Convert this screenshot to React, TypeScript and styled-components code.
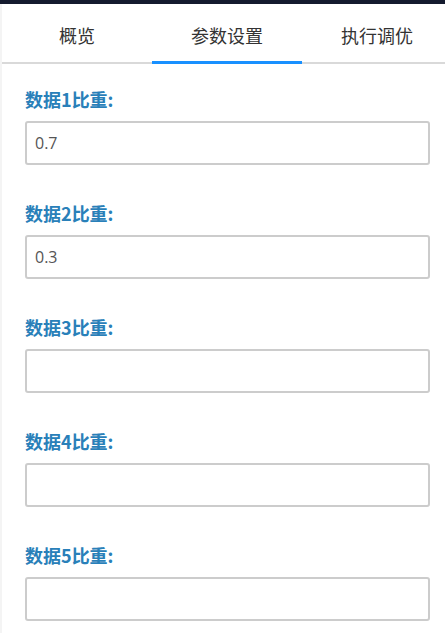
import { createGlobalStyle } from 'styled-components';
import styled from 'styled-components';

const GlobalStyle = createGlobalStyle`
  html, body {
    margin: 0;
    padding: 0;
    background: #ffffff;
    overflow: hidden;
  }
  body {
    font-family: 'Open Sans', 'Noto Sans CJK SC', sans-serif;
  }
`;

const TopBar = styled.div`
  height: 4px;
  background: #141a2e;
`;

const Panel = styled.div`
  border-left: 2px solid #f4f4f4;
  min-height: 629px;
`;

const Tabs = styled.nav`
  display: flex;
  border-bottom: 2px solid #d9d9d9;
`;

const Tab = styled.div<{ $active?: boolean }>`
  position: relative;
  flex: 0 0 150px;
  height: 58px;
  display: flex;
  align-items: center;
  justify-content: center;
  font-family: 'Noto Sans CJK SC', sans-serif;
  font-size: 18px;
  color: #333333;
  padding-top: 4px;
  box-sizing: border-box;

  &::after {
    content: '';
    display: ${({ $active }) => ($active ? 'block' : 'none')};
    position: absolute;
    left: 0;
    right: 0;
    bottom: -2px;
    height: 3px;
    background: #1890ff;
  }
`;

const Form = styled.div`
  padding: 23px 15px 0 23px;
  display: flex;
  flex-direction: column;
  gap: 36px;
`;

const Field = styled.div`
  display: flex;
  flex-direction: column;
  gap: 10px;
`;

const Label = styled.label`
  font-family: 'Noto Sans CJK SC', sans-serif;
  font-weight: 700;
  font-size: 18px;
  line-height: 24px;
  color: #2980b9;
`;

const Input = styled.input`
  box-sizing: border-box;
  width: 100%;
  height: 44px;
  border: 2px solid #cccccc;
  border-radius: 3px;
  padding: 0 8px;
  font-family: 'Open Sans', 'Noto Sans CJK SC', sans-serif;
  font-size: 16px;
  color: #555555;
  background: #ffffff;
  outline: none;
`;

const tabs = ['概览', '参数设置', '执行调优'];
const weights = ['0.7', '0.3', '', '', ''];

export default function App() {
  return (
    <>
      <GlobalStyle />
      <TopBar />
      <Panel>
        <Tabs>
          {tabs.map((t, i) => (
            <Tab key={t} $active={i === 1}>
              {t}
            </Tab>
          ))}
        </Tabs>
        <Form>
          {weights.map((w, i) => (
            <Field key={i}>
              <Label>数据{i + 1}比重:</Label>
              <Input defaultValue={w} />
            </Field>
          ))}
        </Form>
      </Panel>
    </>
  );
}
